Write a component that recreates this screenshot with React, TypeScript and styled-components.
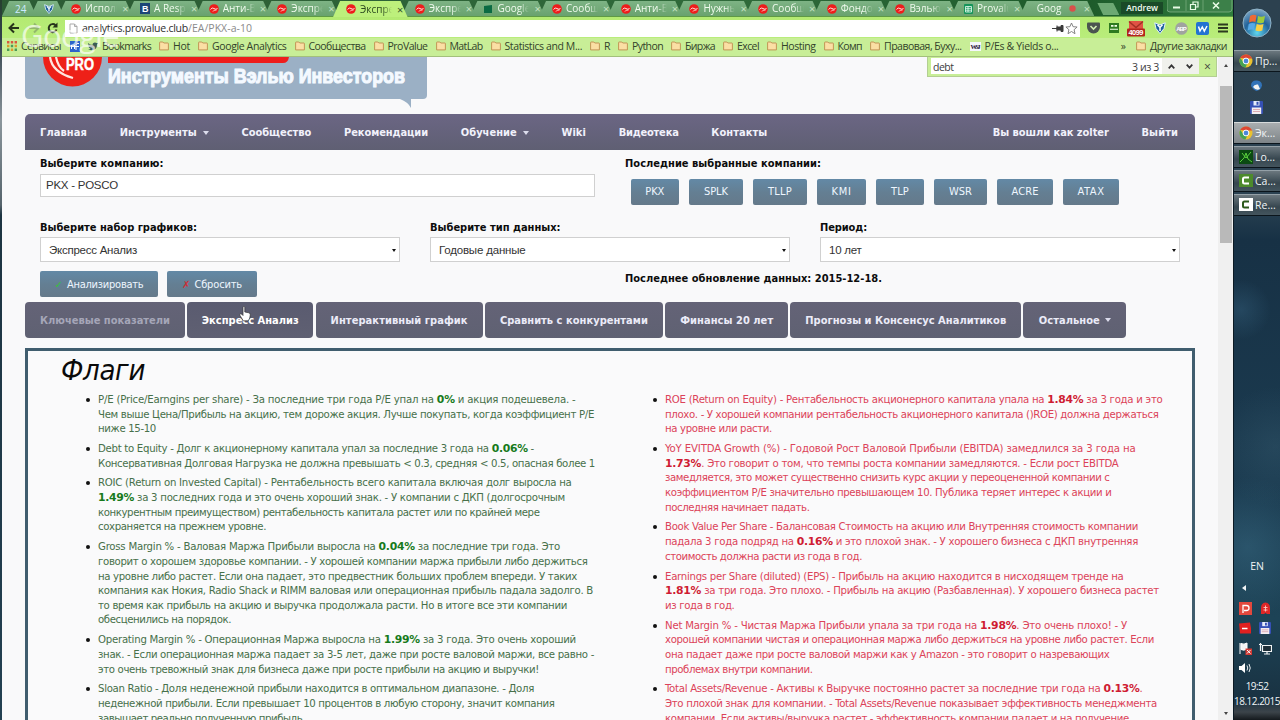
import React, { useLayoutEffect, useRef, useState } from 'react';
import styled, { createGlobalStyle } from 'styled-components';

const tahoma = "'DejaVu Sans Condensed', 'DejaVu Sans', sans-serif";
const segoe = "'Open Sans', 'Noto Sans', sans-serif";

const GlobalStyle = createGlobalStyle`
  * { box-sizing: border-box; }
  html, body { margin: 0; padding: 0; }
  body { width: 1280px; height: 720px; overflow: hidden; font-family: ${tahoma}; }
  svg { flex: none; }
`;

/* ---------- text tracked to a given width ---------- */

const FitSpan = styled.span`
  display: inline-block;
  white-space: pre;
  flex: none;
`;

const Fit = ({ w, children }: { w: number; children: React.ReactNode }) => {
  const ref = useRef<HTMLSpanElement>(null);
  const [track, setTrack] = useState(0);
  useLayoutEffect(() => {
    const el = ref.current;
    if (!el) return;
    const count = (el.textContent || '').length || 1;
    setTrack((w - el.getBoundingClientRect().width) / count);
  }, [w]);
  return <FitSpan ref={ref} style={{ letterSpacing: `${track}px` }}>{children}</FitSpan>;
};

/* ---------- frame ---------- */

const Desktop = styled.div`
  position: relative;
  display: flex;
  width: 1280px;
  height: 720px;
  overflow: hidden;
  background: linear-gradient(180deg, #26402f 0, #33424c 40px, #8b969c 120px, #56646c 205px, #1d3441 215px, #234051 100%);
`;

const Browser = styled.div`
  display: flex;
  flex-direction: column;
  width: 1231px;
  margin-left: 2px;
  height: 720px;
`;

/* ---------- tab strip ---------- */

const TabStrip = styled.div`
  display: flex;
  height: 17px;
  background: linear-gradient(90deg, #2c5b34 0, #2f6a3a 60%, #1d5a2a 88%, #2f7d3d 100%);
  border-bottom: 1px solid #5f9a45;
`;

const TabBody = styled.div<{ $active?: boolean; $w?: number; $c?: string }>`
  display: flex;
  align-items: center;
  flex: none;
  width: ${p => p.$w ?? 74.5}px;
  margin-right: -5.83px;
  height: ${p => (p.$active ? 17 : 16)}px;
  padding: 1px 6px 0 13px;
  clip-path: polygon(7px 1px, calc(100% - 7px) 1px, 100% 100%, 0 100%);
  background: ${p => (p.$active ? '#bdf07c' : 'linear-gradient(180deg, #7fb486, #69a26e)')};
  color: ${p => p.$c ?? (p.$active ? '#2c4a20' : '#f0fbee')};
  font: 10px ${segoe};
  z-index: ${p => (p.$active ? 2 : 1)};
`;

const TabTitle = styled.span`
  width: 32px;
  margin: 0 0 1px 4px;
  overflow: hidden;
  white-space: nowrap;
  mask-image: linear-gradient(90deg, #000 70%, transparent 100%);
  flex: none;
`;

const TabClose = styled.span<{ $dark?: boolean }>`
  font: 11px ${segoe};
  margin-left: 5px;
  line-height: 13px;
  color: ${p => (p.$dark ? '#34502a' : '#c4e2c2')};
`;

const ProIcon = () => (
  <svg width="10" height="10" viewBox="0 0 10 10">
    <circle cx="5" cy="5" r="4.8" fill="#ee1c1c" />
    <path d="M1.5 5.5Q3 3 5 4.5T8.5 4.5M4 7.5Q5 5.5 7.5 6" stroke="#ffd9d2" fill="none" strokeWidth="1" />
  </svg>
);
const BIcon = () => (
  <svg width="10" height="11" viewBox="0 0 10 11">
    <rect width="10" height="11" fill="#1c4677" />
    <text x="2" y="9" fontSize="9" fontWeight="bold" fill="#fff" fontFamily="Liberation Sans, sans-serif">B</text>
  </svg>
);
const GreenIcon = () => (
  <svg width="10" height="10" viewBox="0 0 10 10">
    <path d="M1 2l8-1v8H1z" fill="#0b6b43" />
  </svg>
);
const SheetIcon = () => (
  <svg width="9" height="10" viewBox="0 0 9 10">
    <rect width="9" height="10" rx="1" fill="#15945a" />
    <path d="M1.500 2.500h6v5.500h-6zM1.500 4.300h6M1.500 6.200h6M4 2.500v5.500" stroke="#e8fff2" fill="none" strokeWidth=".8" />
  </svg>
);
const ShieldIcon = ({ s = 10 }: { s?: number }) => (
  <svg width={s} height={s} viewBox="0 0 12 12">
    <path d="M.7.8L6 3 11.300.8 10 6.500 6 11.500 2 6.500z" fill="#1d5f9c" stroke="#dff0ff" strokeWidth="1" />
    <path d="M3.500 2.800L6 5.500l2.500-2.700M6 5.500v3.500" stroke="#fff" strokeWidth="1.500" fill="none" />
  </svg>
);

const tabs: { t: string; i: 'pro' | 'b' | 'g' | 's'; a?: boolean }[] = [
  { t: 'Исполь', i: 'pro' },
  { t: 'A Resp', i: 'b' },
  { t: 'Анти-В', i: 'pro' },
  { t: 'Экспре', i: 'pro' },
  { t: 'Экспре', i: 'pro', a: true },
  { t: 'Экспре', i: 'pro' },
  { t: 'Google', i: 'g' },
  { t: 'Сообщ', i: 'pro' },
  { t: 'Анти-В', i: 'pro' },
  { t: 'Нужны', i: 'pro' },
  { t: 'Сообщ', i: 'pro' },
  { t: 'Фондо', i: 'pro' },
  { t: 'Вэлью', i: 'pro' },
  { t: 'Provalu', i: 's' },
];
const tabIcons = { pro: <ProIcon />, b: <BIcon />, g: <GreenIcon />, s: <SheetIcon /> };

const NewTab = styled.div`
  width: 22px;
  height: 12px;
  margin: 3px 0 0 9px;
  background: #6da873;
  clip-path: polygon(0 0, 72% 0, 100% 100%, 26% 100%);
`;

const WindowButtons = styled.div`
  display: flex;
  align-items: center;
  justify-content: flex-end;
  flex: 1;
  height: 15px;
  color: #f4fff2;
  font: 8.500px ${segoe};
`;

const UserName = styled.span`
  background: #1a4a28;
  padding: 0 5px;
  line-height: 12px;
  margin-right: 4px;
  font-weight: 600;
`;

/* ---------- toolbar ---------- */

const Toolbar = styled.div`
  display: flex;
  align-items: center;
  height: 21px;
  padding: 1px 5px 0 6px;
  background: linear-gradient(180deg, #b4ea72 0, #b9ed7b 100%);
`;

const Omnibox = styled.div`
  display: flex;
  align-items: center;
  gap: 0;
  width: 1016px;
  height: 17px;
  margin-left: 6px;
  padding: 0 2px 0 4px;
  background: #fff;
  font: 10.500px ${segoe};
  color: #2e2e2e;
`;
const Address = styled.div`
  margin-left: 4px;
  display: flex;
`;

const Path = styled.span` color: #8a8a8a; `;
const Spacer = styled.div` flex: 1; `;

const Extensions = styled.div`
  display: flex;
  align-items: center;
  justify-content: space-between;
  width: 141px;
  margin-left: 7px;
`;

const Bookmarks = styled.div`
  display: flex;
  align-items: center;
  height: 19px;
  padding: 0 0 2px 5px;
  background: #c8ee97;
  border-bottom: 1px solid #a3c07c;
  font: 10.500px ${segoe};
  color: #33432a;
`;

const Bookmark = styled.div<{ $gap?: number; $push?: boolean }>`
  display: flex;
  align-items: center;
  gap: 4px;
  flex: none;
  margin-right: ${p => p.$gap ?? 8}px;
  margin-left: ${p => (p.$push ? 'auto' : 0)};
`;

const Folder = () => (
  <svg width="10" height="10" viewBox="0 0 10 10">
    <path d="M.6 8.900V1.600Q.6 1 1.200 1h2.600l1 1h4q.6 0 .6.6v6.300z" fill="#fbdfa4" stroke="#bd8c4e" strokeWidth=".9" />
  </svg>
);

const folders: [string, number][] = [
  ['Hot', 17], ['Google Analytics', 74.5], ['Сообщества', 57], ['ProValue', 40], ['MatLab', 33],
  ['Statistics and M...', 77.5], ['R', 6], ['Python', 31], ['Биржа', 30], ['Excel', 22],
  ['Hosting', 34.5], ['Комп', 24.5], ['Правовая, Буху...', 77.5],
];

/* ---------- page ---------- */

const Viewport = styled.div`
  position: relative;
  display: flex;
  height: 663px;
  background: #f9f9fa;
  overflow: hidden;
`;

const Content = styled.div`
  flex: 1;
  padding: 0 23px;
  height: 663px;
  overflow: hidden;
`;

const Scrollbar = styled.div`
  display: flex;
  flex-direction: column;
  align-items: center;
  width: 15px;
  padding: 7px 1px 5px 2px;
  background: #f0f0f0;
`;
const Thumb = styled.div`
  width: 12px;
  height: 157px;
  margin: 19px 0 auto;
  background: #b9b9b9;
`;
const Arrow = styled.i<{ $up?: boolean; $c?: string; $s?: number }>`
  display: block;
  flex: none;
  border: ${p => p.$s ?? 3.5}px solid transparent;
  border-${p => (p.$up ? 'bottom' : 'top')}: ${p => (p.$s ?? 3) + 1}px solid ${p => p.$c ?? '#444'};
  border-${p => (p.$up ? 'top' : 'bottom')}: 0;
`;

const FindBar = styled.div`
  position: absolute;
  top: 0;
  left: 925px;
  display: flex;
  width: 290px;
  height: 20px;
  padding: 1px 0 2px 3px;
  background: #c8ee97;
  border: 1px solid #b3cf92;
  border-top: 0;
  font: 10.500px ${segoe};
  color: #3c3c3c;
`;
const FindField = styled.div`
  display: flex;
  align-items: center;
  flex: none;
  width: 231px;
  padding: 2px 3px 0 2px;
  background: #fff;
`;
const FindStep = styled.div`
  display: grid;
  place-items: center;
  width: 18.500px;
  background: #f0f1ec;
`;
const FindClose = styled.div`
  display: grid;
  place-items: center;
  flex: 1;
  font-size: 12px;
`;

const Logo = styled.div`
  position: relative;
  width: 402px;
  height: 42px;
  background: #9bb0c5;
  border-radius: 0 0 4px 4px;
`;
const LogoArt = styled.svg`
  position: absolute;
  left: 0;
  top: 0;
  overflow: visible;
`;

const Nav = styled.nav`
  display: flex;
  align-items: center;
  height: 36px;
  margin-top: 15px;
  padding: 1px 17px 0 15px;
  gap: 32.700px;
  border-radius: 5px 5px 0 0;
  background: linear-gradient(180deg, #6b6684 0, #5f5f73 100%);
  color: #f1f1fb;
  font: bold 11px ${tahoma};
`;
const NavItem = styled.div`
  display: flex;
  align-items: center;
  gap: 6px;
`;

const Row = styled.div<{ $h: number }>`
  display: flex;
  height: ${p => p.$h}px;
  padding: 0 15px;
`;
const Field = styled.div<{ $w: number; $mr: number }>`
  width: ${p => p.$w}px;
  margin-right: ${p => p.$mr}px;
  flex: none;
`;
const Label = styled.div<{ $top: number }>`
  height: ${p => p.$top + 16}px;
  padding-top: ${p => p.$top}px;
  font: bold 11px/16px ${tahoma};
  color: #0c0c0c;
`;
const Input = styled.div`
  height: 23px;
  margin-top: 2px;
  padding: 0 5px;
  border: 1px solid #d0d0d0;
  background: #fff;
  font: 11.500px/21px 'Liberation Sans', sans-serif;
  color: #333;
`;
const Select = styled.div`
  display: flex;
  align-items: center;
  justify-content: space-between;
  height: 25px;
  margin-top: 1px;
  padding: 1px 3px 0 8px;
  border: 1px solid #d0d0d0;
  background: #fff;
  font: 11.500px 'Liberation Sans', sans-serif;
  color: #333;
`;
const Tickers = styled.div`
  display: flex;
  gap: 10px;
  margin: 6.500px 0 0 5.500px;
`;
const Button = styled.div<{ $w: number }>`
  display: flex;
  align-items: center;
  justify-content: center;
  gap: 4px;
  flex: none;
  width: ${p => p.$w}px;
  height: 26px;
  border-radius: 2px;
  background: linear-gradient(180deg, #6389a6 0, #647f93 50%, #65798a 100%);
  color: #eef6ff;
  font: 11px ${tahoma};
`;
const Mark = styled.span<{ $c: string }>`
  color: ${p => p.$c};
  font: bold 10px 'DejaVu Sans', sans-serif;
`;

const Actions = styled.div`
  display: flex;
  gap: 9px;
  width: 585px;
  padding-top: 8px;
`;

const SubTabs = styled.div`
  display: flex;
  gap: 2.300px;
`;
const SubTab = styled.div<{ $w: number; $tone?: 'dim' | 'on' }>`
  display: flex;
  align-items: center;
  justify-content: center;
  gap: 5px;
  width: ${p => p.$w}px;
  height: 36px;
  border-radius: 4px;
  background: linear-gradient(180deg, ${p => (p.$tone === 'on' ? '#5a5b70, #5f6072' : '#646377, #5f6172')});
  color: ${p => (p.$tone === 'dim' ? '#a5a6b8' : p.$tone === 'on' ? '#ffffff' : '#ebebf8')};
  font: bold 11px ${tahoma};
`;

const Panel = styled.section`
  height: 400px;
  margin-top: 10px;
  border: 3px solid #405d6e;
  background: #fafafb;
`;
const Title = styled.h1`
  margin: 0;
  padding: 2px 0 0 33px;
  height: 42px;
  font: italic 29px/34px ${tahoma};
  color: #0a0a0a;
`;
const Columns = styled.div`
  display: grid;
  grid-template-columns: 567px 1fr;
`;
const List = styled.ul<{ $c: string; $b: string }>`
  margin: 0;
  padding: 0 0 0 70px;
  list-style: none;
  color: ${p => p.$c};
  font: 11.300px/14.670px ${tahoma};
  b { color: ${p => p.$b}; font-family: 'DejaVu Sans', sans-serif; font-size: 10.800px; }
`;
const Item = styled.li`
  position: relative;
  margin-bottom: 5.100px;
  &::before {
    content: '';
    position: absolute;
    left: -12px;
    top: 5px;
    width: 4px;
    height: 4px;
    border-radius: 50%;
    background: #111;
  }
`;
const Line = styled.div` height: 14.670px; `;

type LineData = [string, number];

const good: LineData[][] = [
  [
    ['P/E (Price/Earngins per share) - За последние три года P/E упал на *0%* и акция подешевела. -', 477.5],
    ['Чем выше Цена/Прибыль на акцию, тем дороже акция. Лучше покупать, когда коэффициент P/E', 496],
    ['ниже 15-10', 58],
  ],
  [
    ['Debt to Equity - Долг к акционерному капитала упал за последние 3 года на *0.06%* -', 436],
    ['Консервативная Долговая Нагрузка не должна превышать < 0.3, средняя < 0.5, опасная более 1', 497],
  ],
  [
    ['ROIC (Return on Invested Capital) - Рентабельность всего капитала включая долг выросла на', 473.5],
    ['*1.49%* за 3 последних года и это очень хороший знак. - У компании с ДКП (долгосрочным', 467],
    ['конкурентным преимуществом) рентабельность капитала растет или по крайней мере', 441.5],
    ['сохраняется на прежнем уровне.', 168],
  ],
  [
    ['Gross Margin % - Валовая Маржа Прибыли выросла на *0.04%* за последние три года. Это', 462],
    ['говорит о хорошем здоровье компании. - У хорошей компании маржа прибыли либо держиться', 489.5],
    ['на уровне либо растет. Если она падает, это предвестник больших проблем впереди. У таких', 479],
    ['компания как Нокия, Radio Shack и RIMM валовая или операционная прибыль падала задолго. В', 495],
    ['то время как прибыль на акцию и выручка продолжала расти. Но в итоге все эти компании', 469],
    ['обесценились на порядок.', 133],
  ],
  [
    ['Operating Margin % - Операционная Маржа выросла на *1.99%* за 3 года. Это очень хороший', 478],
    ['знак. - Если операционная маржа падает за 3-5 лет, даже при росте валовой маржи, все равно -', 496],
    ['это очень тревожный знак для бизнеса даже при росте прибыли на акцию и выручки!', 441],
  ],
  [
    ['Sloan Ratio - Доля неденежной прибыли находится в оптимальном диапазоне. - Доля', 436],
    ['неденежной прибыли. Если превышает 10 процентов в любую сторону, значит компания', 456.5],
    ['завышает реально полученную прибыль.', 207],
  ],
];

const bad: LineData[][] = [
  [
    ['ROE (Return on Equity) - Рентабельность акционерного капитала упала на *1.84%* за 3 года и это', 497.5],
    ['плохо. - У хорошей компании рентабельность акционерного капитала ()ROE) должна держаться', 493.5],
    ['на уровне или расти.', 107],
  ],
  [
    ['YoY EVITDA Growth (%) - Годовой Рост Валовой Прибыли (EBITDA) замедлился за 3 года на', 470.5],
    ['*1.73%*. Это говорит о том, что темпы роста компании замедляются. - Если рост EBITDA', 453.5],
    ['замедляется, это может существенно снизить курс акции у переоцененной компании с', 444.5],
    ['коэффициентом P/E значительно превышающем 10. Публика теряет интерес к акции и', 446.5],
    ['последняя начинает падать.', 144.5],
  ],
  [
    ['Book Value Per Share - Балансовая Стоимость на акцию или Внутренняя стоимость компании', 473],
    ['падала 3 года подряд на *0.16%* и это плохой знак. - У хорошего бизнеса с ДКП внутренняя', 473],
    ['стоимость должна расти из года в год.', 197],
  ],
  [
    ['Earnings per Share (diluted) (EPS) - Прибыль на акцию находится в нисходящем тренде на', 458.5],
    ['*1.81%* за три года. Это плохо. - Прибыль на акцию (Разбавленная). У хорошего бизнеса растет', 494],
    ['из года в год.', 69.5],
  ],
  [
    ['Net Margin % - Чистая Маржа Прибыли упала за три года на *1.98%*. Это очень плохо! - У', 462],
    ['хорошей компании чистая и операционная маржа либо держиться на уровне либо растет. Если', 489],
    ['она падает даже при росте валовой маржи как у Amazon - это говорит о назревающих', 444.5],
    ['проблемах внутри компании.', 147.5],
  ],
  [
    ['Total Assets/Revenue - Активы к Выручке постоянно растет за последние три года на *0.13%*.', 477.5],
    ['Это плохой знак для компании. - Total Assets/Revenue показывает эффективность менеджмента', 492],
    ['компании. Если активы/выручка растет - эффективность компании падает и на получение', 464],
  ],
];

const Flags = ({ data, color, strong }: { data: LineData[][]; color: string; strong: string }) => (
  <List $c={color} $b={strong}>
    {data.map((item, i) => (
      <Item key={i}>
        {item.map(([text, w], j) => (
          <Line key={j}>
            <Fit w={w}>{text.split('*').map((part, k) => (k % 2 ? <b key={k}>{part}</b> : part))}</Fit>
          </Line>
        ))}
      </Item>
    ))}
  </List>
);

/* ---------- taskbar ---------- */

const Taskbar = styled.aside`
  display: flex;
  flex-direction: column;
  width: 47px;
  height: 720px;
  border-left: 1px solid #0c1a24;
  background:
    radial-gradient(circle at 30% 76%, rgba(80, 140, 170, 0.28), transparent 70px),
    radial-gradient(circle at 15% 43%, rgba(75, 130, 165, 0.25), transparent 30px),
    radial-gradient(circle at 90% 62%, rgba(70, 110, 130, 0.25), transparent 60px),
    linear-gradient(180deg, #2c414f 0, #2b4252 200px, #173145 240px, #1b3b50 480px, #1d4356 620px, #193242 700px, #3c444a 712px, #14191d 720px);
  color: #f1f5f7;
  overflow: hidden;
`;
const StartWrap = styled.div`
  display: grid;
  place-items: center;
  height: 50px;
  padding-bottom: 4px;
`;
const TaskButton = styled.div<{ $on?: boolean }>`
  display: flex;
  align-items: center;
  gap: 2px;
  flex: none;
  height: 22px;
  margin-bottom: 2px;
  padding: 0 0 1px 5px;
  border-top: 1px solid ${p => (p.$on ? '#d6dadb' : '#94a0a7')};
  border-bottom: 1px solid #0b151c;
  background: ${p => (p.$on ? 'linear-gradient(180deg, #a9adaf, #7d8488)' : 'linear-gradient(180deg, #6b777e, #36464f 60%, #44555e)')};
  font: 10.500px ${segoe};
`;
const TaskIcons = styled.div`
  display: flex;
  flex-direction: column;
  align-items: center;
  justify-content: space-around;
  height: 48px;
  padding: 0 2px 4px 0;
`;

const Chrome = () => (
  <svg width="14" height="14" viewBox="0 0 14 14">
    <circle cx="7" cy="7" r="6.500" fill="#e9c22f" />
    <path d="M1.200 4A6.500 6.500 0 0 1 13.100 4.600H7z" fill="#dd4632" />
    <path d="M1.200 4A6.500 6.500 0 0 0 6.500 13.500L8.500 9 4.500 8z" fill="#45a353" />
    <circle cx="7" cy="7" r="2.900" fill="#4a86d8" stroke="#fff" strokeWidth="1" />
  </svg>
);
const Floppy = ({ s = 13 }: { s?: number }) => (
  <svg width={s} height={s} viewBox="0 0 13 13">
    <rect width="13" height="13" rx="1" fill="#3550b5" />
    <rect x="3.500" width="6" height="4.500" fill="#e6ecfa" />
    <rect x="6.500" y=".8" width="2" height="3" fill="#3550b5" />
    <rect x="1.800" y="6.500" width="9.400" height="6.500" fill="#f3eef2" />
    <path d="M3 8.500h7M3 10.500h7" stroke="#d59aa4" strokeWidth=".8" />
  </svg>
);
const Camtasia = ({ bg, fg }: { bg: string; fg: string }) => (
  <svg width="14" height="13" viewBox="0 0 14 13">
    <rect width="14" height="13" fill={bg} />
    <path d="M10 3.500H5.500Q4 3.500 4 5v3q0 1.500 1.500 1.500H10" fill="none" stroke={fg} strokeWidth="2" />
  </svg>
);

const Tray = styled.div`
  display: flex;
  flex-direction: column;
  align-items: center;
  flex: none;
  margin-top: auto;
  height: 161px;
  font: 10.500px/14px ${segoe};
`;
const TrayGrid = styled.div`
  display: grid;
  grid-template-columns: 13px 13px;
  grid-auto-rows: 20px;
  column-gap: 7px;
  place-items: center;
  margin: 7px 4px 0 0;
`;
const TrayArrow = styled.i`
  display: block;
  margin: 12px 26px 0 0;
  border: 3px solid transparent;
  border-right: 4px solid #f2f5f6;
  border-left: 0;
`;
const Clock = styled.div`
  width: 46px;
  margin-top: 1px;
  text-align: center;
  font: 10px/14.500px ${segoe};
  white-space: nowrap;
`;

const Watermark = styled.div`
  position: absolute;
  left: 21px;
  top: 15px;
  z-index: 5;
  font: 31px/40px ${segoe};
  color: rgba(255, 255, 255, 0.68);
`;
const Pointer = styled.svg`
  position: absolute;
  left: 239px;
  top: 306px;
  z-index: 5;
`;

const navLeft: [string, number, boolean?][] = [
  ['Главная', 47], ['Инструменты', 77, true], ['Сообщество', 70], ['Рекомендации', 84],
  ['Обучение', 56, true], ['Wiki', 24.5], ['Видеотека', 60], ['Контакты', 56],
];
const tickers: [string, number, number][] = [
  ['PKX', 48.5, 19], ['SPLK', 54, 24], ['TLLP', 54, 24], ['KMI', 49, 20],
  ['TLP', 48, 18], ['WSR', 53, 23], ['ACRE', 56, 27], ['ATAX', 56, 27],
];

export default function App() {
  return (
    <Desktop>
      <GlobalStyle />
      <Browser>
        <TabStrip>
          <TabBody $w={34.5} $c="#cdeaff">24</TabBody>
          <TabBody $w={33.5}><ShieldIcon s={10} /></TabBody>
          {tabs.map((t, i) => (
            <TabBody key={i} $active={t.a}>
              {tabIcons[t.i]}
              <TabTitle>{t.t}</TabTitle>
              <TabClose $dark={t.a}>×</TabClose>
            </TabBody>
          ))}
          <TabBody>
            <TabTitle>Goog</TabTitle>
            <svg width="10" height="7" viewBox="0 0 10 7"><circle cx="3.500" cy="3.500" r="3.200" fill="#d8504a" /></svg>
            <TabClose>×</TabClose>
          </TabBody>
          <NewTab />
          <WindowButtons>
            <UserName>Andrew</UserName>
            <svg width="66" height="15" viewBox="0 0 66 15" stroke="#e9fbe6" fill="none">
              <rect x="0" y="-3" width="65" height="15" rx="3" stroke="#8ab98e" strokeWidth=".7" fill="#3c8049" />
              <path d="M19 -1v12M36 -1v12" stroke="#8ab98e" strokeWidth=".6" />
              <path d="M6 7.500h7" strokeWidth="2" />
              <path d="M23.500 4.500h5v5h-5zM26 4.500v-2.500h5v5h-2.500" strokeWidth="1.200" />
              <path d="M46 2.500l6 6M52 2.500l-6 6" strokeWidth="1.600" />
            </svg>
          </WindowButtons>
        </TabStrip>

        <Toolbar>
          <svg width="51" height="14" viewBox="0 0 51 14" fill="none" stroke="#26331b" strokeWidth="2">
            <path d="M11 7H2M6 2.500L1.500 7 6 11.500" />
            <path d="M21 7h9M26 2.500L30.500 7 26 11.500" stroke="#93b76c" />
            <path d="M47.500 4.200A4 4 0 1 0 48.500 8.500" />
            <path d="M49.500 1.500v5h-5z" fill="#26331b" stroke="none" />
          </svg>
          <Omnibox>
            <svg width="9" height="11" viewBox="0 0 9 11"><path d="M1 1h4.500L8 3.500V10H1zM5.500 1v2.500H8" fill="#fff" stroke="#aaa" /></svg>
            <Address>
              <Fit w={106}>analytics.provalue.club</Fit>
              <Path><Fit w={64}>/EA/PKX-a-10</Fit></Path>
            </Address>
            <Spacer />
            <svg width="26" height="13" viewBox="0 0 26 13">
              <path d="M0 6.500h5M5 3.500v6M5 5h4V3.500h2v6H9V8H5z" fill="#3b3b3b" stroke="#3b3b3b" />
              <path d="M19.500 1l1.600 3.700 4 .3-3 2.700.9 4-3.500-2.200L16 11.700l.9-4-3-2.700 4-.3z" fill="#fff" stroke="#777" strokeWidth=".9" />
            </svg>
          </Omnibox>
          <Extensions>
            <svg width="13" height="12" viewBox="0 0 13 12"><path d="M0 1.500Q0 .5 1 .5h11q1 0 1 1V5a6.500 6.500 0 0 1-13 0z" fill="#4b5450" /><path d="M3.500 4l3 3 3-3" stroke="#d3eeb5" strokeWidth="1.600" fill="none" /></svg>
            <svg width="10" height="10" viewBox="0 0 10 10"><rect width="10" height="10" fill="#2e7a20" /><path d="M2 2h2.500v1.800H2zM5.500 2H8v1.800H5.500zM1 5.800h8v1H1z" fill="#f4ffe9" /></svg>
            <svg width="18" height="17" viewBox="0 0 18 17"><rect x="2" y="1" width="14" height="10" rx="1" fill="#e05344" /><path d="M2 1.500l7 6 7-6" stroke="#a33024" strokeWidth="1.500" fill="none" /><rect y="8.500" width="18" height="8" rx="1" fill="#b3241c" /><text x="1.500" y="15.300" fontSize="7.500" fontWeight="bold" fill="#fff" fontFamily="Liberation Sans, sans-serif" textLength="15">4099</text></svg>
            <ShieldIcon s={12} />
            <svg width="13" height="13" viewBox="0 0 13 13"><circle cx="6.500" cy="6.500" r="6.300" fill="#a0a39f" /><text x="1.300" y="8.800" fontSize="6" fontWeight="bold" fill="#fff" fontFamily="Liberation Sans, sans-serif" textLength="10.500">ABP</text></svg>
            <svg width="13" height="13" viewBox="0 0 13 13"><rect width="13" height="13" rx="2" fill="#2373d2" /><path d="M2.500 4.500l1.500 4.500 2.300-4 2 4L11 4" stroke="#fff" strokeWidth="1.500" fill="none" /></svg>
            <svg width="10" height="10" viewBox="0 0 10 10" stroke="#2c3a1f" strokeWidth="2"><path d="M0 1.500h10M0 5h10M0 8.500h10" /></svg>
          </Extensions>
        </Toolbar>

        <Bookmarks>
          <Bookmark $gap={8.5}>
            <svg width="10" height="10" viewBox="0 0 10 10">
              <path d="M0 0h2.400v2.400H0zM3.800 0h2.400v2.400H3.800zM7.600 0H10v2.400H7.600z" fill="#d8573f" />
              <path d="M0 3.800h2.400v2.400H0zM7.600 3.800H10v2.400H7.600zM3.800 7.600h2.400V10H3.800z" fill="#d99b2d" />
              <path d="M3.800 3.800h2.400v2.400H3.800zM0 7.600h2.400V10H0zM7.600 7.600H10V10H7.600z" fill="#4c9a55" />
            </svg>
            <Fit w={40}>Сервисы</Fit>
          </Bookmark>
          <Bookmark $gap={8.5}>
            <svg width="10" height="11" viewBox="0 0 10 11"><rect width="10" height="11" fill="#2c62c9" /><path d="M1.500 8V4l1.500 2 1.500-2v4M6 9V4q0-2 3-1.500M5 5.500h4" stroke="#fff" fill="none" /></svg>
          </Bookmark>
          <Bookmark>
            <svg width="10" height="9" viewBox="0 0 10 9"><path d="M0 1q2 2 4.500 2Q4.500.5 7 .5q1 0 1.500.5H10L9 2.500Q9 8 4 8.300 2 8.300 0 7.500q2 0 2.500-1Q.5 6 .5 4z" fill="#3a5c56" /></svg>
            <Fit w={49}>Bookmarks</Fit>
          </Bookmark>
          {folders.map(([t, w]) => (
            <Bookmark key={t}><Folder /><Fit w={w}>{t}</Fit></Bookmark>
          ))}
          <Bookmark>
            <svg width="11" height="9" viewBox="0 0 11 9"><rect width="11" height="9" fill="#f4f7fb" /><text x=".5" y="7" fontSize="6.500" fontWeight="bold" fill="#213" fontFamily="Liberation Serif, serif" textLength="10">WSJ</text></svg>
            <Fit w={74}>P/Es &amp; Yields o...</Fit>
          </Bookmark>
          <Bookmark $push $gap={10}>»</Bookmark>
          <Bookmark $gap={6}><Folder /><Fit w={77}>Другие закладки</Fit></Bookmark>
        </Bookmarks>

        <Viewport>
          <Content>
            <Logo>
              <LogoArt width="402" height="52" viewBox="0 0 402 52">
                <path d="M375 42h11v9q-3-6-11-9z" fill="#9bb0c5" />
                <path d="M18 0a29.500 29.500 0 0 0 59 0z" fill="#ee2018" />
                <path d="M25 0q2 15 23 21M31 0q2 10 8 14" stroke="#ffe6e0" strokeWidth="2.200" fill="none" />
                <path d="M83 0h181q-1 6-6 6H83z" fill="#ee1d1c" />
                <text x="41" y="12.500" fontSize="16" fontWeight="bold" fill="#fff" stroke="#fff" strokeWidth=".5" fontFamily="Liberation Sans, sans-serif" textLength="28" lengthAdjust="spacingAndGlyphs">PRO</text>
                <text x="83" y="26" fontSize="20.500" fontWeight="bold" fill="#f4f9ff" stroke="#f4f9ff" strokeWidth="1.100" fontFamily="Liberation Sans, sans-serif" textLength="297" lengthAdjust="spacingAndGlyphs">Инструменты Вэлью Инвесторов</text>
              </LogoArt>
            </Logo>
            <Nav>
              {navLeft.map(([t, w, more]) => (
                <NavItem key={t}><Fit w={w}>{t}</Fit>{more && <Arrow $c="#dcdcec" />}</NavItem>
              ))}
              <Spacer />
              <NavItem><Fit w={116}>Вы вошли как zolter</Fit></NavItem>
              <NavItem><Fit w={36.5}>Выйти</Fit></NavItem>
            </Nav>

            <Row $h={63}>
              <Field $w={555} $mr={30}>
                <Label $top={6}><Fit w={123.5}>Выберите компанию:</Fit></Label>
                <Input><Fit w={72}>PKX - POSCO</Fit></Input>
              </Field>
              <Field $w={555} $mr={0}>
                <Label $top={6}><Fit w={196}>Последние выбранные компании:</Fit></Label>
                <Tickers>
                  {tickers.map(([t, w, tw]) => <Button key={t} $w={w}><Fit w={tw}>{t}</Fit></Button>)}
                </Tickers>
              </Field>
            </Row>
            <Row $h={50}>
              <Field $w={360} $mr={30}>
                <Label $top={7}><Fit w={157}>Выберите набор графиков:</Fit></Label>
                <Select><Fit w={88}>Экспресс Анализ</Fit><Arrow $s={2.5} $c="#111" /></Select>
              </Field>
              <Field $w={360} $mr={30}>
                <Label $top={7}><Fit w={130.5}>Выберите тип данных:</Fit></Label>
                <Select><Fit w={86.5}>Годовые данные</Fit><Arrow $s={2.5} $c="#111" /></Select>
              </Field>
              <Field $w={360} $mr={0}>
                <Label $top={7}><Fit w={47}>Период:</Fit></Label>
                <Select><Fit w={32.5}>10 лет</Fit><Arrow $s={2.5} $c="#111" /></Select>
              </Field>
            </Row>
            <Row $h={39}>
              <Actions>
                <Button $w={118}><Mark $c="#35c03c">✓</Mark><Fit w={76.5}>Анализировать</Fit></Button>
                <Button $w={90}><Mark $c="#cc2f38">✗</Mark><Fit w={47.5}>Сбросить</Fit></Button>
              </Actions>
              <Label $top={8}><Fit w={257}>Последнее обновление данных: 2015-12-18.</Fit></Label>
            </Row>

            <SubTabs>
              <SubTab $w={160} $tone="dim"><Fit w={130}>Ключевые показатели</Fit></SubTab>
              <SubTab $w={126} $tone="on"><Fit w={97}>Экспресс Анализ</Fit></SubTab>
              <SubTab $w={167}><Fit w={137}>Интерактивный график</Fit></SubTab>
              <SubTab $w={178}><Fit w={148}>Сравнить с конкурентами</Fit></SubTab>
              <SubTab $w={123}><Fit w={93}>Финансы 20 лет</Fit></SubTab>
              <SubTab $w={230.5}><Fit w={201}>Прогнозы и Консенсус Аналитиков</Fit></SubTab>
              <SubTab $w={103}><Fit w={61}>Остальное</Fit><Arrow $c="#dcdcec" /></SubTab>
            </SubTabs>

            <Panel>
              <Title><Fit w={84}>Флаги</Fit></Title>
              <Columns>
                <Flags data={good} color="#47704a" strong="#177a1c" />
                <Flags data={bad} color="#dc4359" strong="#cf1c33" />
              </Columns>
            </Panel>
          </Content>
          <Scrollbar>
            <Arrow $up $s={2.5} />
            <Thumb />
            <Arrow $s={2.5} />
          </Scrollbar>
          <FindBar>
            <FindField>
              <Fit w={20.5}>debt</Fit>
              <Spacer />
              <Fit w={27}>3 из 3</Fit>
            </FindField>
            <FindStep><svg width="7" height="5" viewBox="0 0 7 5"><path d="M.7 4.300l2.800-3 2.800 3" stroke="#333" strokeWidth="1.700" fill="none" /></svg></FindStep>
            <FindStep><svg width="7" height="5" viewBox="0 0 7 5"><path d="M.7.7l2.800 3 2.800-3" stroke="#333" strokeWidth="1.700" fill="none" /></svg></FindStep>
            <FindClose>×</FindClose>
          </FindBar>
        </Viewport>
      </Browser>

      <Taskbar>
        <StartWrap>
          <svg width="30" height="30" viewBox="0 0 30 30">
            <defs>
              <radialGradient id="orb" cx=".5" cy=".85" r=".9">
                <stop offset="0" stopColor="#5fd6ee" />
                <stop offset=".5" stopColor="#23639a" />
                <stop offset="1" stopColor="#8db3cc" />
              </radialGradient>
            </defs>
            <circle cx="15" cy="15" r="14" fill="url(#orb)" stroke="#8fb2c6" strokeWidth="1" />
            <path d="M8 8q3.500-2 6.500-.5L13.500 14q-3-1.200-6.500.5z" fill="#ee6a35" />
            <path d="M16 8q3 1.500 7 0l-1.200 6.500q-3 1.500-6.800 0z" fill="#9ccc3c" />
            <path d="M6.700 16q3.300-1.800 6.500-.4L12 22q-3-1.200-6.300.5z" fill="#57a9e8" />
            <path d="M14.700 16q3.300 1.500 6.800 0l-1.200 6.500q-3 1.500-6.800 0z" fill="#fbd043" />
          </svg>
        </StartWrap>
        <TaskButton><Chrome />Пр...</TaskButton>
        <TaskIcons>
          <svg width="13" height="13" viewBox="0 0 13 13"><path d="M1 7Q1 1 7 1.500q5 .5 5 5Q11 11 6.500 12 3 11 1 7z" fill="#3273b8" /><path d="M3 8q1-3 5-2.500L10 10q-4 2-7-2z" fill="#f4f4f2" /></svg>
          <Floppy />
        </TaskIcons>
        <TaskButton $on><Chrome />Эк...</TaskButton>
        <TaskButton>
          <svg width="14" height="14" viewBox="0 0 14 14"><rect width="14" height="14" fill="#0b4a12" /><path d="M1 12l4-4 2-5 2 6 4 3M3 3l4 5 5-6" stroke="#58cf3c" fill="none" /></svg>
          Lo...
        </TaskButton>
        <TaskButton><Camtasia bg="#4d8a2c" fg="#fff" />Ca...</TaskButton>
        <TaskButton><Camtasia bg="#fff" fg="#2d5a1c" />Re...</TaskButton>
        <Tray>
          EN
          <TrayArrow />
          <TrayGrid>
            <svg width="13" height="13" viewBox="0 0 13 13"><rect width="13" height="13" fill="#e2483d" /><path d="M4 11V3.500h3.500a2.500 2.500 0 0 1 0 5H5" stroke="#fff" strokeWidth="1.300" fill="none" /></svg>
            <svg width="11" height="13" viewBox="0 0 11 13"><path d="M5.500.5Q10 1 10 6v6H7l-1.500-1L4 12H1V6q0-5 4.500-5.500z" fill="#de2727" /><path d="M3.500 5.500h4M5.500 3.500v6M3.500 8h4" stroke="#ffc9c2" strokeWidth=".9" /></svg>
            <svg width="12" height="12" viewBox="0 0 12 12"><path d="M0 1.500L11 .5 12 6v5.500H1z" fill="#e02020" /><path d="M3 6.500h5.500" stroke="#fff" strokeWidth="1.500" /></svg>
            <Floppy s={12} />
            <svg width="13" height="13" viewBox="0 0 13 13"><path d="M1 1v11M2 1.500q3 1.500 6-.5v6Q5 9 2 7.500z" stroke="#fff" fill="#f4f4f4" /><rect x="6.500" y="6.500" width="6.500" height="6.500" fill="#d13a34" /><path d="M8 8l3.500 3.500M11.500 8L8 11.500" stroke="#fff" /></svg>
            <svg width="13" height="13" viewBox="0 0 13 13"><path d="M3.500 3.500h9v6h-9zM8 9.500v2M5 12h6M1.500 1v4M0 2.500h3M1.500 5v4" stroke="#f1f4f5" strokeWidth="1.200" fill="#1f2f38" /></svg>
            <svg width="13" height="12" viewBox="0 0 13 12"><path d="M0 4h2.500L6 1v10L2.500 8H0z" fill="#fff" /><path d="M8 3.500q1.500 2.500 0 5M10 2q2.500 4 0 8" stroke="#e6edf0" fill="none" /></svg>
          </TrayGrid>
          <Clock><Fit w={22.5}>19:52</Fit><br /><Fit w={46}>18.12.2015</Fit></Clock>
        </Tray>
      </Taskbar>

      <Watermark><Fit w={98}>Google</Fit></Watermark>
      <Pointer width="12" height="16" viewBox="0 0 12 16">
        <path d="M4 8V1.500q0-1 .9-1t.9 1V6l4 .8q1.500.4 1.500 2-.1 3.500-2 6h-5Q2.500 12 .7 9q-.2-1 .8-1.200Q3 7.800 4 9.500z" fill="#fff" stroke="#333" strokeWidth=".7" />
      </Pointer>
    </Desktop>
  );
}
